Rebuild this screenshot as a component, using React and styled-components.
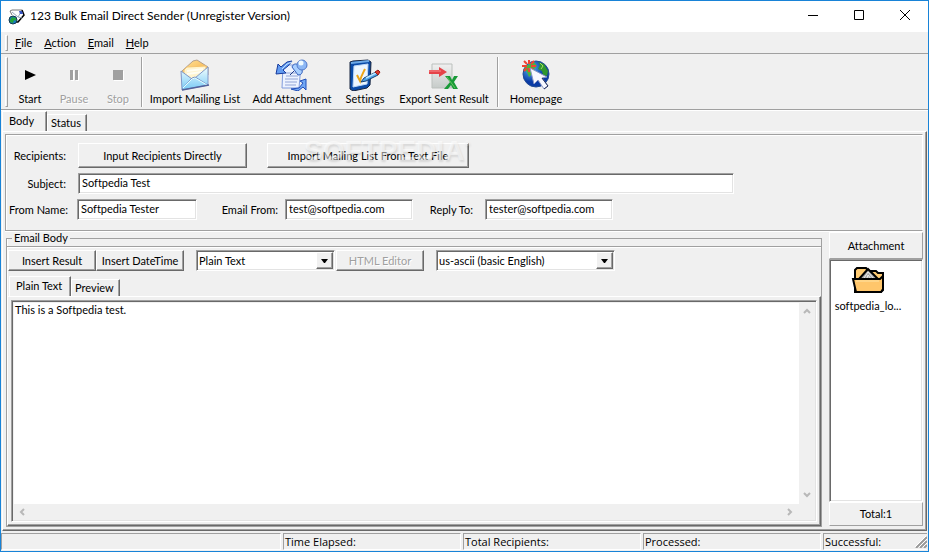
import { useState } from "react";
import styled, { createGlobalStyle, css } from "styled-components";

const GlobalStyle = createGlobalStyle`
  *,
  *::before,
  *::after {
    box-sizing: border-box;
  }

  :root {
    --color-accent: #1883d7;
    --color-face: #f0f0f0;
    --color-light: #ffffff;
    --color-soft: #e3e3e3;
    --color-shadow: #a0a0a0;
    --color-dark: #696969;
    --font-ui: Lato, "Liberation Sans", sans-serif;
    --font-caption: "Open Sans", "Noto Sans", sans-serif;
  }

  body {
    margin: 0;
    background: var(--color-face);
    color: #000;
    font: 11px/14px var(--font-ui);
    font-variant-ligatures: none;
  }

  button,
  input,
  select,
  textarea {
    font: inherit;
    font-variant-ligatures: none;
    color: inherit;
    margin: 0;
    border-radius: 0;
    outline: none;
  }
`;

const sunken = css`
  border: 1px solid;
  border-color: var(--color-shadow) var(--color-light) var(--color-light) var(--color-shadow);
  box-shadow: inset 1px 1px 0 var(--color-dark), inset -1px -1px 0 var(--color-soft);
`;

const raised = css`
  border: 1px solid;
  border-color: var(--color-light) var(--color-dark) var(--color-dark) var(--color-light);
  box-shadow: inset -1px -1px 0 var(--color-shadow);
`;

const Window = styled.div`
  position: relative;
  display: flex;
  flex-direction: column;
  min-height: 100vh;
  border: 1px solid var(--color-accent);
  background: var(--color-face);
`;

const TitleBar = styled.header`
  display: flex;
  align-items: center;
  gap: 4px;
  height: 31px;
  padding: 0 0 2px 7px;
  background: #fff;
`;

const Title = styled.h1`
  flex: 1;
  margin: 0;
  font: 12px/16px var(--font-ui);
  font-variant-ligatures: none;
`;

const CaptionButtons = styled.div`
  display: flex;
`;

const CaptionButton = styled.button`
  display: flex;
  align-items: center;
  justify-content: center;
  width: 46px;
  height: 28px;
  padding: 0;
  border: 0;
  background: transparent;
`;

const Band = styled.div`
  display: flex;
  align-items: ${(props) => props.$align || "center"};
  height: ${(props) => props.$height};
  padding: 2px 4px;
  border-top: 1px solid var(--color-face);
  border-bottom: 1px solid var(--color-shadow);
  box-shadow: 0 1px 0 var(--color-light);
`;

const Grip = styled.span`
  width: 3px;
  align-self: stretch;
  border: 1px solid;
  border-color: var(--color-light) var(--color-shadow) var(--color-shadow) var(--color-light);
`;

const MenuButton = styled.button`
  padding: 2px 6px;
  border: 0;
  background: transparent;
`;

const MenuList = styled.nav`
  display: flex;
  padding-left: 1px;
`;

const Divider = styled.span`
  width: 2px;
  margin: 0 1px;
  align-self: stretch;
  border-left: 1px solid var(--color-shadow);
  border-right: 1px solid var(--color-light);
`;

const Tool = styled.button`
  display: flex;
  flex-direction: column;
  align-items: center;
  gap: 1px;
  width: ${(props) => props.$width};
  padding: 2px 0 0;
  border: 0;
  background: transparent;
  white-space: nowrap;

  &:disabled {
    color: var(--color-shadow);
    text-shadow: 1px 1px 0 var(--color-light);
  }
`;

const Page = styled.main`
  flex: 1;
  display: flex;
  flex-direction: column;
  padding: 1px 1px 0;
`;

const TabList = styled.div`
  display: flex;
  align-items: flex-end;
  height: 20px;
  margin-top: ${(props) => props.$top || "0"};
  padding-left: ${(props) => props.$indent || "0"};
`;

const Tab = styled.button`
  width: ${(props) => props.$width};
  height: 17px;
  padding: 0 0 0 3px;
  border: solid;
  border-width: 1px 1px 0 1px;
  border-color: var(--color-light) var(--color-dark) var(--color-dark) var(--color-light);
  box-shadow: inset -1px 0 0 var(--color-shadow);
  background: var(--color-face);
  text-align: left;
  white-space: nowrap;

  &[aria-selected="true"] {
    height: 20px;
    padding: 0 0 2px 6px;
  }
`;

const TabPage = styled.section`
  flex: 1;
  display: flex;
  flex-direction: column;
  padding: ${(props) => props.$padding || "2px 3px 3px 2px"};
  ${raised}
`;

const HeaderPanel = styled.form`
  display: flex;
  flex-direction: column;
  gap: 5px;
  height: 97px;
  padding: 8px 3px 0;
  border: 1px solid;
  border-color: var(--color-shadow) var(--color-light) var(--color-shadow) var(--color-shadow);
  box-shadow: inset 1px 1px 0 var(--color-light), 0 1px 0 var(--color-light);
`;

const FieldRow = styled.div`
  display: flex;
  align-items: center;
`;

const Label = styled.label`
  width: ${(props) => props.$width};
  padding-right: ${(props) => props.$gap || "12px"};
  text-align: right;
  white-space: nowrap;
`;

const Field = styled.input`
  width: ${(props) => props.$width};
  height: 21px;
  padding: 1px 3px 3px;
  background: #fff;
  ${sunken}
`;

const PushButton = styled.button`
  width: ${(props) => props.$width};
  height: ${(props) => props.$height || "21px"};
  margin-right: ${(props) => props.$after || "0"};
  padding: 0;
  background: var(--color-face);
  white-space: nowrap;
  ${raised}

  &:disabled {
    color: var(--color-shadow);
    text-shadow: 1px 1px 0 var(--color-light);
  }
`;

const Workspace = styled.div`
  flex: 1;
  display: flex;
  gap: 7px;
  padding: 1px 0 0 1px;
`;

const EmailGroup = styled.fieldset`
  flex: 1;
  display: flex;
  flex-direction: column;
  min-width: 0;
  margin: 0;
  padding: 0;
  border: 1px solid var(--color-shadow);
  box-shadow: inset 1px 0 0 var(--color-light);
`;

const Legend = styled.legend`
  margin-left: 5px;
  padding: 0 2px;
  line-height: 12px;
`;

const EmailTools = styled.div`
  display: flex;
  align-items: center;
  margin-top: 2px;
  padding: 3px 0 0 1px;
  border-top: 1px solid var(--color-shadow);
  box-shadow: inset 0 1px 0 var(--color-light);
`;

const SelectBox = styled.div`
  display: flex;
  align-items: center;
  width: ${(props) => props.$width};
  height: 21px;
  margin-right: ${(props) => props.$after || "0"};
  padding: 1px;
  background: #fff;
  ${sunken}
`;

const Select = styled.select`
  flex: 1;
  width: 100%;
  min-width: 0;
  height: 17px;
  padding: 0 0 0 1px;
  border: 0;
  background: transparent;
  appearance: none;
`;

const DropArrow = styled.span`
  display: flex;
  align-items: center;
  justify-content: center;
  width: 17px;
  height: 17px;
  background: var(--color-face);
  pointer-events: none;
  ${raised}
`;

const Editor = styled.div`
  flex: 1;
  display: grid;
  grid-template-columns: 1fr 16px;
  grid-template-rows: 1fr 16px;
  padding: 1px;
  background: var(--color-face);
  ${sunken}
`;

const MessageText = styled.textarea`
  min-height: 100px;
  margin: 1px 0 0 1px;
  padding: 0 1px;
  border: 0;
  background: #fff;
  overflow: hidden;
  resize: none;
`;

const ScrollBar = styled.div`
  display: flex;
  flex-direction: ${(props) => (props.$vertical ? "column" : "row")};
  align-items: center;
  justify-content: space-between;
  padding: 5px;
`;

const Sidebar = styled.aside`
  display: flex;
  flex-direction: column;
  width: 94px;
  padding-bottom: 1px;
`;

const SidebarCaption = styled.div`
  display: flex;
  align-items: center;
  justify-content: center;
  height: ${(props) => props.$height};
  border: 1px solid;
  border-color: var(--color-light) var(--color-shadow) var(--color-shadow) var(--color-light);
`;

const FileList = styled.ul`
  flex: 1;
  margin: 0;
  padding: 6px 4px;
  background: #fff;
  list-style: none;
  ${sunken}
`;

const FileItem = styled.li`
  display: flex;
  flex-direction: column;
  align-items: center;
  gap: 5px;
  width: 68px;
`;

const StatusBar = styled.footer`
  display: flex;
  gap: 2px;
  padding: 2px 1px 1px 0;
`;

const StatusCell = styled.div`
  flex: 1 1 ${(props) => props.$width};
  height: 17px;
  padding: 1px;
  border: 1px solid;
  border-color: var(--color-shadow) var(--color-light) var(--color-light) var(--color-shadow);
  font: 11px/14px var(--font-caption);
  white-space: nowrap;
`;

const LastCell = styled(StatusCell)`
  display: flex;
  justify-content: space-between;
  border-right: 0;
  padding-right: 0;
`;

const Watermark = styled.div`
  position: absolute;
  top: 134px;
  left: 303px;
  color: rgba(255, 255, 255, 0.5);
  font: bold 28px/32px "Liberation Sans", sans-serif;
  text-shadow: 1px 2px 2px rgba(0, 0, 0, 0.1);
  pointer-events: none;

  sup {
    font-size: 8px;
    line-height: 8px;
    vertical-align: 14px;
  }
`;

const AppIcon = () => (
  <svg width="18" height="18" viewBox="0 0 18 18">
    <path d="M4 3l10-1 3 6-6 7H6L2 9z" fill="#fff" />
    <path d="M4 8L2 4l2-1h10" fill="none" stroke="#777" />
    <path d="M14 3l2 5-6 7H8" fill="none" stroke="#000" strokeWidth="1.5" />
    <path d="M4 5l6 5 3-5M10 10l4 1" fill="none" stroke="#9ab" />
    <path d="M11 4h3l1 3h-3z" fill="#3654c4" />
    <circle cx="5" cy="13" r="4" fill="#1679c5" stroke="#163a4a" />
    <path d="M2 13l2-3 4 1v3l-2-1-1 3-3-1z" fill="#25a43b" />
  </svg>
);

const PlayIcon = () => (
  <svg width="32" height="32">
    <path d="M11 11l11 5-11 5z" fill="#000" />
  </svg>
);

const PauseIcon = () => (
  <svg width="32" height="32">
    <path d="M13 12h3v10h-3zM18 12h3v10h-3z" fill="#fff" />
    <path d="M12 11h3v10h-3zM17 11h3v10h-3z" fill="#a0a0a0" />
  </svg>
);

const StopIcon = () => (
  <svg width="32" height="32">
    <path d="M12 12h10v10H12z" fill="#fff" />
    <path d="M11 11h10v10H11z" fill="#a0a0a0" />
  </svg>
);

const MailIcon = () => (
  <svg width="32" height="32" viewBox="0 0 32 32">
    <defs>
      <linearGradient id="flap" x1="0" y1="0" x2="1" y2="1">
        <stop offset="0" stopColor="#ffe49a" />
        <stop offset="1" stopColor="#f5a83c" />
      </linearGradient>
      <linearGradient id="mail" x1="0" y1="0" x2="0" y2="1">
        <stop offset="0" stopColor="#f2ffff" />
        <stop offset="1" stopColor="#78c9f5" />
      </linearGradient>
    </defs>
    <path d="M3 12L14 2l4-1 11 7v8L3 18z" fill="url(#flap)" stroke="#b5a08c" />
    <path d="M5 11l3-3 19-1v10l-12 6L5 17z" fill="#fff4ce" stroke="#f5c56e" />
    <path d="M8 12l16-2M8 15l15-2" stroke="#fffdf2" strokeWidth="2" />
    <path d="M2 12l11 8 3-1L29 8v18L3 31z" fill="url(#mail)" stroke="#8098c8" />
    <path d="M3 30l10-11 3-1 13 8" fill="none" stroke="#7a93c9" />
    <path d="M4 29l9-9 3-1 12 7" fill="none" stroke="#e4ffff" />
    <path d="M3 31l27-5" stroke="#53629b" strokeWidth="1.5" />
  </svg>
);

const AttachIcon = () => (
  <svg width="34" height="32" viewBox="0 0 34 32">
    <path d="M8 6h18l-2 23H7z" fill="#edf3ff" stroke="#809cdd" />
    <path d="M11 14h10M11 17h12M10 20h13M10 23h12M10 26h11" stroke="#91a4d6" />
    <path d="M17 2L12 3 6 8 3 5 1 15l10-1-3-3 5-4z" fill="#639cf1" stroke="#173b9d" />
    <path d="M17 3l-5 2-5 5" stroke="#bfe0ff" fill="none" />
    <path d="M16 30l8-1 4-5-3-2 6-2v11l-3-3-5 4z" fill="#72a8f4" stroke="#204eb9" />
    <path d="M17 8c1-3 4-4 6-2l4-4 5 5-5 4c1 3-1 5-4 5z" fill="#a8cfff" stroke="#315ebb" />
    <path d="M19 12l-4 4" stroke="#203c87" />
    <circle cx="27" cy="6" r="5" fill="#8db8f5" stroke="#5279c8" />
    <circle cx="26" cy="4" r="2.5" fill="#eefaff" />
  </svg>
);

const SettingsIcon = () => (
  <svg width="32" height="32" viewBox="0 0 32 32">
    <path d="M1 3l3-1 15-1 3 2-1 23-3 3-14 3-3-2z" fill="#0b4ba8" stroke="#17243e" />
    <path d="M2 4l18-2" stroke="#6da9e7" strokeWidth="2" />
    <path d="M5 7l14-2-1 20-14 3z" fill="#edf6ff" stroke="#bdd8f8" />
    <path d="M8 16l3 6c1-5 3-8 5-12" fill="none" stroke="#eda517" strokeWidth="2" />
    <path d="M15 19l12-6 2 3-12 6-5 1z" fill="#4fa3e8" stroke="#174171" />
    <path d="M17 19l10-5" stroke="#b8e4ff" strokeWidth="1.5" />
    <path d="M26 13l3-2 2 2-2 3z" fill="#dc3829" stroke="#941c18" />
  </svg>
);

const ExportIcon = () => (
  <svg width="32" height="32" viewBox="0 0 32 32">
    <defs>
      <linearGradient id="sheet" x1="0" y1="0" x2="0" y2="1">
        <stop offset="0" stopColor="#f0f0f0" />
        <stop offset="1" stopColor="#c6cbc9" />
      </linearGradient>
    </defs>
    <path d="M4 5h20v24H4z" fill="url(#sheet)" stroke="#bbc0bd" />
    <path d="M1 11h10V8l8 5-8 5v-3H1z" fill="#e64349" />
    <path d="M1 12h12" stroke="#f58d8f" />
    <path d="M17 17h5l2 4 2-4h4l-4 6 4 7h-5l-2-4-3 4h-4l6-7z" fill="#199a38" />
    <path d="M19 18l8 11" stroke="#65c660" />
  </svg>
);

const GlobeIcon = () => (
  <svg width="32" height="32" viewBox="0 0 32 32">
    <defs>
      <radialGradient id="sea" cx=".3" cy=".3">
        <stop offset="0" stopColor="#55b4f4" />
        <stop offset="1" stopColor="#0a3ba6" />
      </radialGradient>
    </defs>
    <circle cx="16" cy="15" r="13" fill="url(#sea)" stroke="#244c92" />
    <path d="M6 7l8-4 3 4-3 3 2 3-5 3-2 2-2-5-3-3z" fill="#4eb33d" />
    <path d="M18 3l6 2 4 7-1 5-4-1-1-4-4-2 2-4z" fill="#2e962e" />
    <path d="M20 4l3 3-2 3" stroke="#a0dc61" fill="none" />
    <path d="M9 1v4M9 9v4M2 7h5M11 7h5M4 2l3 3M11 9l3 3M14 2l-3 3M7 9l-3 3" stroke="#f04432" strokeWidth="2" />
    <path d="M10 9l4 16 4-4 6 9 4-3-6-8 5-1z" fill="#f7f8ff" stroke="#8a96c4" />
    <path d="M24 30l4-3-6-8" fill="none" stroke="#252f59" />
  </svg>
);

const FolderIcon = () => (
  <svg width="34" height="28" viewBox="0 0 34 28">
    <path d="M4 12V4l2-2h9l2 3h8l2 2h5v17l-2 2H4z" fill="#ffcb72" stroke="#000" strokeWidth="2" />
    <path d="M8 13l9-10 10 10z" fill="#a9a9a9" stroke="#000" strokeWidth="2" />
    <path d="M13 12l4-6 6 7M16 12l1-3 3 4" fill="none" stroke="#eee" />
    <path d="M2 13h27l3-3v13l-2 3H5z" fill="#ffc66b" stroke="#000" strokeWidth="2" />
    <path d="M5 15h23" stroke="#ffe4a5" />
  </svg>
);

const Chevron = ({ angle = 0 }) => (
  <svg width="8" height="8" viewBox="-4 -4 8 8">
    <path d="M-3 2L0-1 3 2" transform={`rotate(${angle})`} fill="none" stroke="#b8b8b8" strokeWidth="2" />
  </svg>
);

const DownArrow = () => (
  <svg width="7" height="4">
    <path d="M0 0h7L4 4H3z" />
  </svg>
);

const ResizeGrip = () => (
  <svg width="13" height="13">
    <path d="M2 13L13 2M6 13l7-7M10 13l3-3" stroke="#999" strokeWidth="2" />
    <path d="M1 12L12 1M5 12l8-8M9 12l4-4" stroke="#fff" />
  </svg>
);

const menus = ["File", "Action", "Email", "Help"];

const controlTools = [
  { name: "Start", icon: PlayIcon, width: "44px" },
  { name: "Pause", icon: PauseIcon, width: "44px", disabled: true },
  { name: "Stop", icon: StopIcon, width: "44px", disabled: true },
];

const mailTools = [
  { name: "Import Mailing List", icon: MailIcon, width: "102px" },
  { name: "Add Attachment", icon: AttachIcon, width: "92px" },
  { name: "Settings", icon: SettingsIcon, width: "54px" },
  { name: "Export Sent Result", icon: ExportIcon, width: "104px" },
];

const siteTools = [{ name: "Homepage", icon: GlobeIcon, width: "72px" }];

function ToolGroup({ tools }) {
  return tools.map(({ name, icon: Icon, width, disabled }) => (
    <Tool key={name} type="button" $width={width} disabled={disabled}>
      <Icon />
      {name}
    </Tool>
  ));
}

function Tabs({ tabs, indent, top }) {
  const [active, setActive] = useState(tabs[0].name);

  return (
    <TabList role="tablist" $indent={indent} $top={top}>
      {tabs.map((tab) => (
        <Tab
          key={tab.name}
          type="button"
          role="tab"
          aria-selected={active === tab.name}
          $width={tab.width}
          onClick={() => setActive(tab.name)}
        >
          {tab.name}
        </Tab>
      ))}
    </TabList>
  );
}

function ComboBox({ label, value, width, after }) {
  return (
    <SelectBox $width={width} $after={after}>
      <Select aria-label={label} defaultValue={value}>
        <option>{value}</option>
      </Select>
      <DropArrow>
        <DownArrow />
      </DropArrow>
    </SelectBox>
  );
}

function App() {
  return (
    <>
      <GlobalStyle />
      <Window>
        <TitleBar>
          <AppIcon />
          <Title>123 Bulk Email Direct Sender (Unregister Version)</Title>
          <CaptionButtons>
            <CaptionButton type="button" aria-label="Minimize">
              <svg width="11" height="11">
                <path d="M0 5.5h10" stroke="#000" />
              </svg>
            </CaptionButton>
            <CaptionButton type="button" aria-label="Maximize">
              <svg width="11" height="11">
                <path d="M.5.5h9v9h-9z" fill="none" stroke="#000" />
              </svg>
            </CaptionButton>
            <CaptionButton type="button" aria-label="Close">
              <svg width="11" height="11">
                <path d="M0 0l10 10M10 0L0 10" stroke="#000" />
              </svg>
            </CaptionButton>
          </CaptionButtons>
        </TitleBar>

        <Band $height="22px">
          <Grip />
          <MenuList>
            {menus.map((menu) => (
              <MenuButton key={menu} type="button">
                <u>{menu[0]}</u>
                {menu.slice(1)}
              </MenuButton>
            ))}
          </MenuList>
        </Band>

        <Band $height="56px" $align="flex-start">
          <Grip />
          <ToolGroup tools={controlTools} />
          <Divider />
          <ToolGroup tools={mailTools} />
          <Divider />
          <ToolGroup tools={siteTools} />
        </Band>

        <Page>
          <Tabs
            tabs={[
              { name: "Body", width: "45px" },
              { name: "Status", width: "40px" },
            ]}
          />
          <TabPage>
            <HeaderPanel>
              <FieldRow>
                <Label as="span" $width="69px">
                  Recipients:
                </Label>
                <PushButton type="button" $width="169px" $height="25px" $after="20px">
                  Input Recipients Directly
                </PushButton>
                <PushButton type="button" $width="202px" $height="25px">
                  Import Mailing List From Text File
                </PushButton>
              </FieldRow>
              <FieldRow>
                <Label htmlFor="subject" $width="69px">
                  Subject:
                </Label>
                <Field id="subject" $width="656px" defaultValue="Softpedia Test" />
              </FieldRow>
              <FieldRow>
                <Label htmlFor="fromName" $width="68px">
                  From Name:
                </Label>
                <Field id="fromName" $width="120px" defaultValue="Softpedia Tester" />
                <Label htmlFor="emailFrom" $width="88px" $gap="7px">
                  Email From:
                </Label>
                <Field id="emailFrom" $width="128px" defaultValue="test@softpedia.com" />
                <Label htmlFor="replyTo" $width="72px" $gap="12px">
                  Reply To:
                </Label>
                <Field id="replyTo" $width="128px" defaultValue="tester@softpedia.com" />
              </FieldRow>
            </HeaderPanel>

            <Workspace>
              <EmailGroup>
                <Legend>Email Body</Legend>
                <EmailTools>
                  <PushButton type="button" $width="88px">
                    Insert Result
                  </PushButton>
                  <PushButton type="button" $width="88px" $after="12px">
                    Insert DateTime
                  </PushButton>
                  <ComboBox label="Message format" value="Plain Text" width="139px" after="1px" />
                  <PushButton type="button" $width="88px" $after="12px" disabled>
                    HTML Editor
                  </PushButton>
                  <ComboBox label="Character set" value="us-ascii (basic English)" width="179px" />
                </EmailTools>
                <Tabs
                  indent="2px"
                  top="5px"
                  tabs={[
                    { name: "Plain Text", width: "62px" },
                    { name: "Preview", width: "49px" },
                  ]}
                />
                <TabPage $padding="3px">
                  <Editor>
                    <MessageText aria-label="Message" defaultValue="This is a Softpedia test." />
                    <ScrollBar $vertical>
                      <Chevron />
                      <Chevron angle={180} />
                    </ScrollBar>
                    <ScrollBar>
                      <Chevron angle={270} />
                      <Chevron angle={90} />
                    </ScrollBar>
                  </Editor>
                </TabPage>
              </EmailGroup>

              <Sidebar>
                <SidebarCaption $height="27px">Attachment</SidebarCaption>
                <FileList>
                  <FileItem>
                    <FolderIcon />
                    softpedia_lo...
                  </FileItem>
                </FileList>
                <SidebarCaption $height="24px">Total:1</SidebarCaption>
              </Sidebar>
            </Workspace>
          </TabPage>
        </Page>

        <StatusBar>
          <StatusCell $width="280px" />
          <StatusCell $width="178px">Time Elapsed:</StatusCell>
          <StatusCell $width="178px">Total Recipients:</StatusCell>
          <StatusCell $width="178px">Processed:</StatusCell>
          <LastCell $width="104px">
            Successful:
            <ResizeGrip />
          </LastCell>
        </StatusBar>

        <Watermark>
          SOFTPEDIA<sup>®</sup>
        </Watermark>
      </Window>
    </>
  );
}

export default App;
